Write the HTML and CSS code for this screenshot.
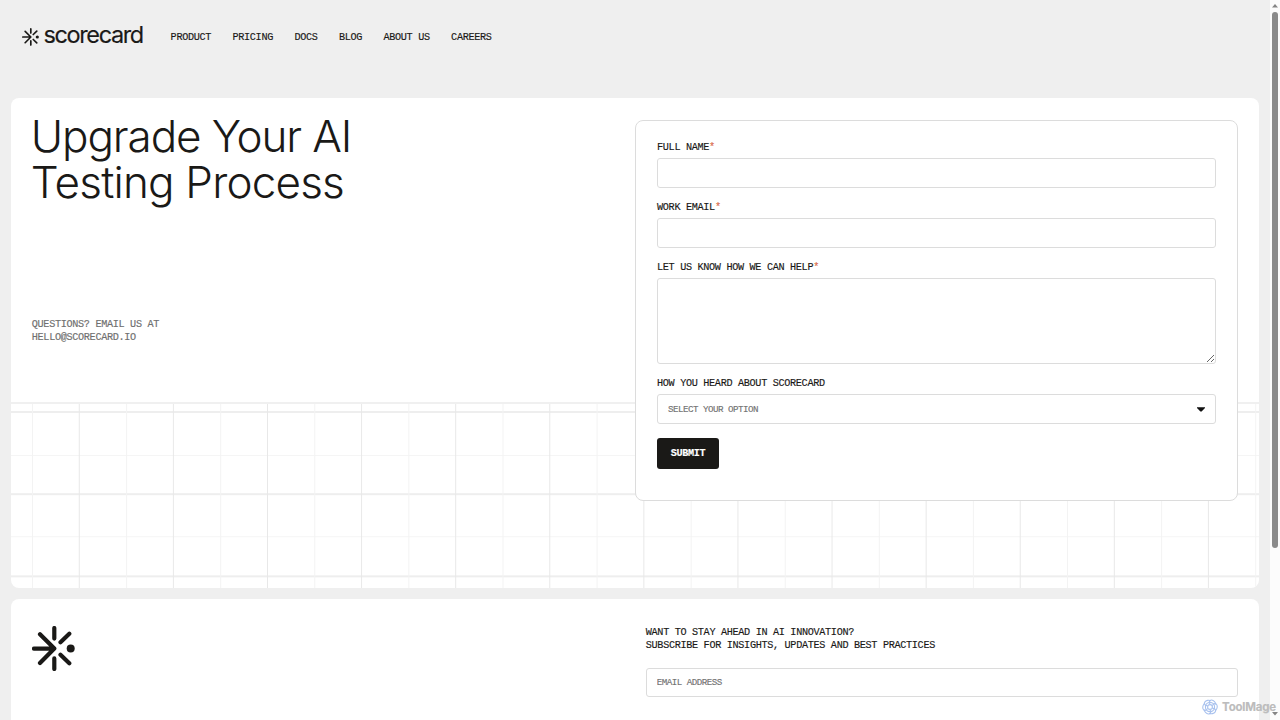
FILE: index.html
```html
<!DOCTYPE html>
<html lang="en">
  <head>
    <meta charset="UTF-8" />
    <meta name="viewport" content="width=device-width, initial-scale=1.0" />
    <title>Scorecard | Contact</title>
    <link rel="stylesheet" href="styles.css">
  </head>
  <body>
    <svg class="symbols" width="0" height="0">
      <symbol id="mark" viewBox="0 0 43 45">
        <path d="M2 22.6H22M8 8.2 22.3 22.6 8 37M22.3 2V12.6M22.3 32.4V43M28.5 16.2 37.3 7.8M28.5 28.8 37.3 37.2" fill="none" stroke="currentColor" stroke-width="4.2" stroke-linecap="round" stroke-linejoin="round" />
        <circle cx="38.7" cy="22.6" r="4" fill="currentColor" />
      </symbol>
    </svg>

    <div class="page">
      <header class="navbar">
        <a class="logo" href="#">
          <svg class="logo-mark"><use href="#mark" /></svg>
          <span class="logo-text">scorecard</span>
        </a>
        <nav class="nav-links">
          <a href="#">Product</a>
          <a href="#">Pricing</a>
          <a href="#">Docs</a>
          <a href="#">Blog</a>
          <a href="#">About us</a>
          <a href="#">Careers</a>
        </nav>
      </header>

      <section class="hero">
        <div class="intro">
          <h1>Upgrade Your AI<br /><span class="line-two">Testing Process</span></h1>
          <p>Questions? Email us at<br />hello@scorecard.io</p>
        </div>
        <form class="contact-form">
          <label for="name">Full name<span class="required">*</span></label>
          <input type="text" id="name" />
          <label for="email">Work email<span class="required">*</span></label>
          <input type="text" id="email" />
          <label for="message">Let us know how we can help<span class="required">*</span></label>
          <textarea id="message"></textarea>
          <label for="source">How you heard about Scorecard</label>
          <div class="select" id="source">
            <span>Select your option</span>
            <svg class="caret" viewBox="0 0 8 5"><path d="M0 0.2H8V1L4.6 4.4H3.4L0 1Z" /></svg>
          </div>
          <button type="button">Submit</button>
        </form>
      </section>

      <footer class="footer">
        <svg class="footer-mark"><use href="#mark" /></svg>
        <div class="subscribe">
          <p>Want to stay ahead in AI innovation?<br />Subscribe for insights, updates and best practices</p>
          <input type="text" placeholder="EMAIL ADDRESS" />
        </div>
      </footer>
    </div>

    <div class="scrollbar">
      <svg class="arrow" viewBox="0 0 6 4"><path d="M0 3.5 3 0 6 3.5Z" /></svg>
      <div class="track"><div class="thumb"></div></div>
      <svg class="arrow" viewBox="0 0 6 4"><path d="M0 0 3 3.5 6 0Z" /></svg>
    </div>

    <div class="watermark">
      <svg viewBox="0 0 16 16">
        <path id="petal" d="M8 5.2C6.4 3.2 7.6 0.8 9.6 1S14 3.4 13.8 5.6" />
        <use href="#petal" transform="rotate(60 8 8)" />
        <use href="#petal" transform="rotate(120 8 8)" />
        <use href="#petal" transform="rotate(180 8 8)" />
        <use href="#petal" transform="rotate(240 8 8)" />
        <use href="#petal" transform="rotate(300 8 8)" />
        <circle cx="8" cy="8" r="2.4" />
        <circle cx="8" cy="8" r="4.6" />
      </svg>
      <span>ToolMage</span>
    </div>
  </body>
</html>
```
FILE: styles.css
```css
* {
  box-sizing: border-box;
}

body {
  display: flex;
  position: relative;
  height: 720px;
  margin: 0;
  overflow: hidden;
  background-color: #efefef;
  color: #1a1917;
  font-family: "Liberation Mono", monospace;
  font-size: 10.2px;
  letter-spacing: -0.33px;
  line-height: 13px;
  -webkit-text-stroke: 0.15px;
}

a {
  color: inherit;
  text-decoration: none;
}

p {
  margin: 0;
  text-transform: uppercase;
}

.symbols {
  position: absolute;
}

.page {
  width: 1270px;
  padding: 0 10.6px;
}

/* navigation */
.navbar {
  display: flex;
  align-items: flex-start;
  height: 98.4px;
  padding: 22px 11px 0;
}

.logo {
  display: flex;
  width: 149px;
}

.logo-mark {
  width: 17px;
  height: 18px;
  margin: 5.5px 5px 0 0;
}

.logo-text {
  font-family: Inter, sans-serif;
  font-size: 23.5px;
  letter-spacing: -1.4px;
  line-height: 26px;
}

.nav-links {
  display: flex;
  gap: 21.4px;
  padding-top: 9px;
  text-transform: uppercase;
}

/* contact section */
.hero {
  display: flex;
  justify-content: space-between;
  position: relative;
  height: 490px;
  padding: 22px 21.2px 0;
  overflow: hidden;
  border-radius: 8px;
  background-color: #fff;
}

.hero::before {
  content: "";
  position: absolute;
  inset: 304px 0 0;
  border-top: 2px solid #f0f0f0;
  background-image:
    linear-gradient(90deg, #e8e8e8 1.2px, transparent 1.2px),
    linear-gradient(90deg, #f3f3f3 1.2px, transparent 1.2px),
    linear-gradient(#eeeeee 2px, transparent 2px),
    linear-gradient(#f5f5f5 1px, transparent 1px);
  background-size: 94.1px 100%, 94.1px 100%, 100% 82.2px, 100% 81.2px;
  background-position: 67.8px 0, 21px 0, 0 7px, 0 51px;
}

h1 {
  height: 197px;
  margin: -6px 0 0 -1px;
  font-family: Inter, sans-serif;
  font-size: 44px;
  font-weight: 300;
  letter-spacing: -1.1px;
  line-height: 45.5px;
  -webkit-text-stroke: 0;
}

.line-two {
  letter-spacing: -0.8px;
}

.intro p {
  margin-top: 6.6px;
  color: #6f6f6f;
}

.contact-form {
  position: relative;
  display: flex;
  flex-direction: column;
  width: 603px;
  height: 380.2px;
  margin-right: 0.2px;
  padding: 20px 21px 0;
  border: 1px solid #dcdcdc;
  border-radius: 8px;
  background-color: #fff;
}

label {
  margin-bottom: 4px;
  text-transform: uppercase;
}

.required {
  color: #d9694a;
}

input,
textarea,
.select {
  flex-shrink: 0;
  width: 100%;
  height: 29.4px;
  margin-bottom: 13.6px;
  padding: 0 10px;
  border: 1px solid #dcdcdc;
  border-radius: 3px;
  outline: none;
  background-color: #fff;
}

textarea {
  height: 85.4px;
}

.select {
  display: flex;
  align-items: center;
  justify-content: space-between;
  margin-bottom: 14.4px;
  color: #737373;
  font-size: 9.2px;
  letter-spacing: -0.52px;
  text-transform: uppercase;
}

.caret {
  width: 8px;
  height: 5px;
  fill: #111;
}

button {
  width: 62px;
  height: 30.6px;
  padding: 1px 0 0;
  border: none;
  border-radius: 3px;
  background-color: #1a1917;
  color: #fff;
  font: bold 10.2px "Liberation Mono", monospace;
  letter-spacing: -0.33px;
  text-transform: uppercase;
}

/* footer */
.footer {
  display: flex;
  height: 140px;
  margin-top: 11px;
  padding: 26.6px 21.2px 0;
  border-radius: 8px 8px 0 0;
  background-color: #fff;
}

.footer-mark {
  width: 43px;
  height: 45px;
  margin-right: 571px;
}

.subscribe {
  flex: 1;
}

.subscribe input {
  margin-top: 16px;
  font: 9.2px "Liberation Mono", monospace;
  letter-spacing: -0.52px;
}

.subscribe input::placeholder {
  color: #737373;
}

.scrollbar {
  display: flex;
  flex-direction: column;
  align-items: center;
  width: 10px;
  padding: 4px 0;
  background-color: #fcfcfc;
}

.arrow {
  width: 6px;
  height: 4px;
  fill: #858585;
}

.track {
  flex: 1;
  padding-top: 4px;
}

.thumb {
  width: 6px;
  height: 536px;
  border-radius: 3px;
  background-color: #8b8b8b;
}

.watermark {
  display: flex;
  align-items: center;
  gap: 4px;
  position: absolute;
  right: 4px;
  bottom: 5px;
  color: #bcbcbc;
  font: bold 11.5px Inter, sans-serif;
  letter-spacing: -0.2px;
}

.watermark svg {
  width: 16px;
  height: 16px;
  fill: none;
  stroke: #a9c2ee;
  stroke-width: 1.1;
}
```
